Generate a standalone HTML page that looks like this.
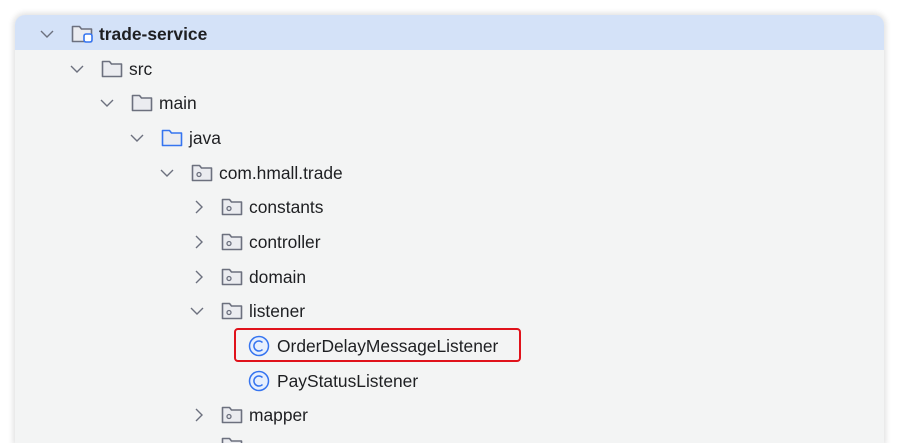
<!DOCTYPE html>
<html><head><meta charset="utf-8"><style>
html,body{margin:0;width:898px;height:443px;overflow:hidden;}
body{background:#fff;position:relative;font-family:"Liberation Sans","Noto Sans CJK SC",sans-serif;}
.wrap{position:absolute;left:0;top:0;width:898px;height:443px;overflow:hidden;}
.panel{position:absolute;left:15px;top:15px;width:869px;height:428px;background:#f3f4f4;border-radius:10px 10px 0 0;box-shadow:0 0 6px 2px rgba(0,0,0,0.12);overflow:hidden;}
.sel{position:absolute;left:0;top:0;width:100%;height:35px;background:#d4e2f8;}
.row{position:absolute;height:34px;line-height:34px;font-size:17.4px;color:#1e1f22;white-space:nowrap;}
.row svg{position:absolute;top:0;}
.t{position:absolute;top:0;}
.red{position:absolute;left:234px;top:328px;width:283px;height:30px;border:2px solid #e0121b;border-radius:4px;}
</style></head><body>
<div class="wrap">
<div class="panel"><div class="sel"></div></div>
<div id="rows"></div>
<div class="red"></div>
</div>
<script>
var rows=[
[0,'v','proj','trade-service',1],
[1,'v','f','src'],
[2,'v','f','main'],
[3,'v','fb','java'],
[4,'v','p','com.hmall.trade'],
[5,'>','p','constants'],
[5,'>','p','controller'],
[5,'>','p','domain'],
[5,'v','p','listener'],
[6,'','c','OrderDelayMessageListener'],
[6,'','c','PayStatusListener'],
[5,'>','p','mapper']
];
var ys=[17,52,86,121,156,190,225,260,294,329,364,398];
var h='';
rows.forEach(function(r,i){
 var lv=r[0],x0=40+lv*30,y=ys[i];
 var s='<div class="row" style="left:0;top:'+y+'px;width:898px">';
 if(r[1]=='v') s+='<svg style="left:'+x0+'px" width="14" height="34"><path d="M1 14 L7 20 L13 14" fill="none" stroke="#6c707e" stroke-width="1.4"/></svg>';
 if(r[1]=='>') s+='<svg style="left:'+(x0+2)+'px" width="14" height="34"><path d="M4 11 L10 17 L4 23" fill="none" stroke="#6c707e" stroke-width="1.4"/></svg>';
 var ix=x0+31-(r[2]=='c'?2:0);
 var col=r[2]=='fb'?'#3574f0':'#6c707e';
 if(r[2]=='c'){
  s+='<svg style="left:'+(ix-1)+'px" width="24" height="34"><circle cx="11" cy="17" r="9.5" fill="#e7effd" stroke="#3574f0" stroke-width="1.5"/><path d="M14.5 13.5 A5 5 0 1 0 14.5 20.5" fill="none" stroke="#3574f0" stroke-width="1.5"/></svg>';
 } else {
  s+='<svg style="left:'+ix+'px" width="24" height="34"><path d="M1.5 9.5 h7 l2 2.5 h10 v12.5 h-19 z" fill="#ebecf0" stroke="'+col+'" stroke-width="1.6" stroke-linejoin="round"/>';
  if(r[2]=='p') s+='<circle cx="8" cy="18.5" r="2" fill="none" stroke="#6c707e" stroke-width="1.3"/>';
  if(r[2]=='proj') s+='<rect x="13" y="17" width="8" height="8" rx="2" fill="#fff" stroke="#3574f0" stroke-width="1.6"/>';
  s+='</svg>';
 }
 s+='<span class="t" style="left:'+(ix+28)+'px;'+(r[4]?'font-weight:bold':'')+'">'+r[3]+'</span></div>';
 h+=s;
});
h+='<svg style="position:absolute;left:221px;top:437px" width="24" height="6"><path d="M1.5 9.5 V1.5 h7 l2 2.5 h10 v5" fill="#ebecf0" stroke="#6c707e" stroke-width="1.6" stroke-linejoin="round"/></svg>';
document.getElementById('rows').innerHTML=h;
</script>
</body></html>
